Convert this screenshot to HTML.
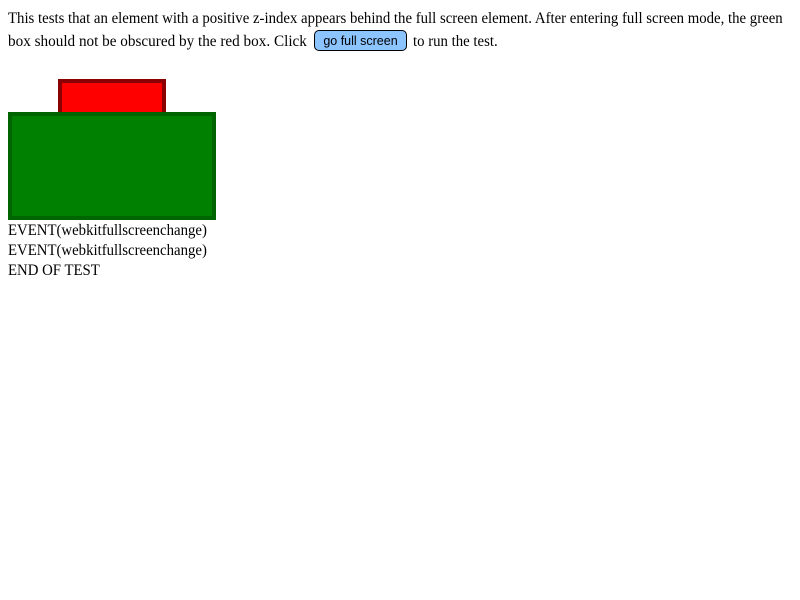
<!DOCTYPE html>
<html><head><style>
body{margin:0;font-family:"Liberation Serif",serif;font-size:16px;color:#000;background:#fff;overflow:hidden}
.a{position:absolute;white-space:nowrap;transform:scaleX(0.925);transform-origin:0 0}
.btn{position:absolute;left:314px;top:30px;width:91px;height:19px;background:#8cc4ff;border:1px solid #000;border-radius:5px;font-family:"Liberation Sans",sans-serif;font-size:12.5px;line-height:21px;text-align:center}
</style></head><body>
<div class="a" style="left:8px;top:10px;line-height:18px">This tests that an element with a positive z-index appears behind the full screen element. After entering full screen mode, the green</div>
<div class="a" style="left:8px;top:33px;line-height:18px;transform:scaleX(0.95)">box should not be obscured by the red box. Click</div>
<div class="btn">go full screen</div>
<div class="a" style="left:413px;top:33px;line-height:18px">to run the test.</div>
<div style="position:absolute;left:58px;top:79px;width:100px;height:40px;background:#f00;border:4px solid #8b0000"></div>
<div style="position:absolute;left:8px;top:112px;width:200px;height:100px;background:#008000;border:4px solid #006400"></div>
<div class="a" style="left:8px;top:221px;line-height:20px">EVENT(webkitfullscreenchange)<br>EVENT(webkitfullscreenchange)<br>END OF TEST</div>
</body></html>
